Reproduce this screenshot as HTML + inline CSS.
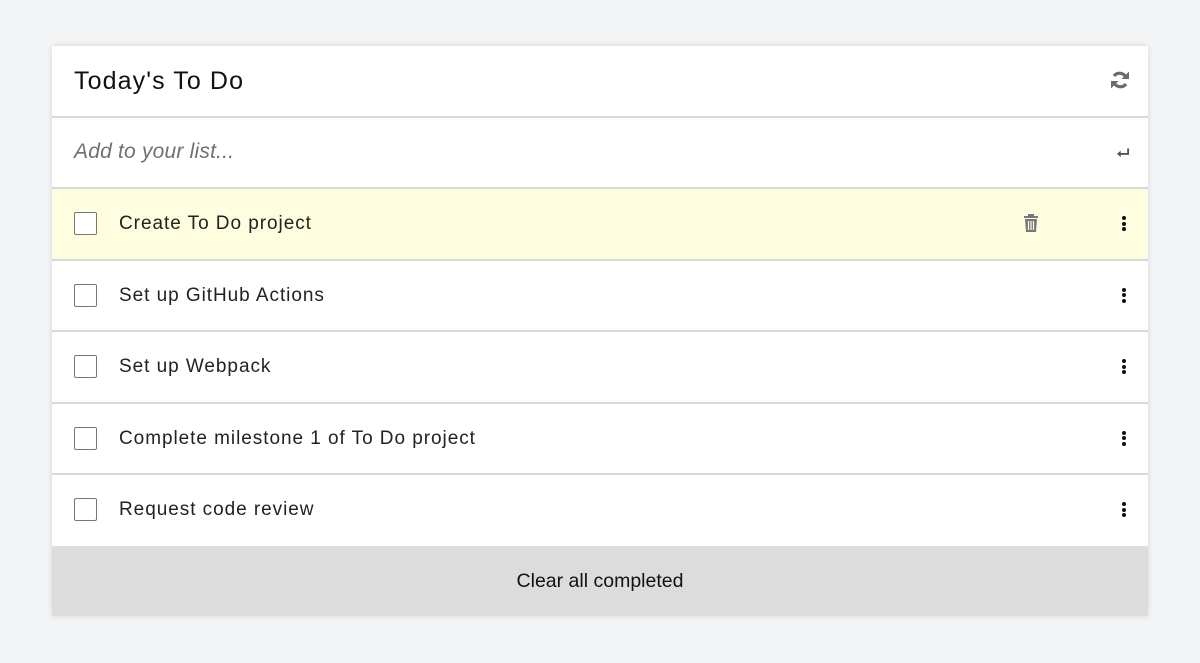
<!DOCTYPE html>
<html><head><style>
*{box-sizing:border-box;margin:0;padding:0}
body{width:1200px;height:663px;background:#f3f4f6;font-family:"Liberation Sans",sans-serif;position:relative;overflow:hidden}
.card{position:absolute;left:52px;top:46px;width:1096px;height:570px;background:#fff;box-shadow:0 0 6px rgba(0,0,0,.12)}
.row{position:absolute;left:0;width:1096px;border-bottom:2px solid #d9d9d9}
.title{font-size:25px;color:#111;position:absolute;left:22px;top:21px;letter-spacing:1.1px}
.add{font-size:21px;font-style:italic;color:#707070;position:absolute;left:22px;top:22px;letter-spacing:0.2px}
.cb{position:absolute;left:22px;top:23px;width:23px;height:23px;border:1.5px solid #777;border-radius:2px;background:#fff}
.txt{position:absolute;left:67px;top:24px;font-size:19px;color:#222;letter-spacing:0.95px}
.dots{position:absolute;left:1070px;top:27px;width:4px}
.dots i{display:block;width:4px;height:4px;border-radius:2px;background:#111;margin-bottom:1.5px}
.foot{position:absolute;left:0;top:500px;width:1096px;height:70px;background:#dcdcdc;text-align:center;line-height:70px;font-size:19.5px;color:#111}
</style></head><body>
<div class="card">
<div class="row" style="top:0;height:72px"><div class="title">Today's To Do</div>
<svg style="position:absolute;left:1058px;top:24px" width="20" height="20" viewBox="0 0 20 20"><path d="M16 7.5A7 7 0 0 0 4 6" stroke="#6b6b6b" stroke-width="3.2" fill="none"/><path d="M19 1.5v7.5h-7.5z" fill="#6b6b6b"/><path d="M4 12.5a7 7 0 0 0 12 1.5" stroke="#6b6b6b" stroke-width="3.2" fill="none"/><path d="M1 18.5v-7.5h7.5z" fill="#6b6b6b"/></svg></div>
<div class="row" style="top:72px;height:71px"><div class="add">Add to your list...</div>
<svg style="position:absolute;left:1065px;top:30px" width="13" height="10" viewBox="0 0 14 10"><path d="M12 0v6H3" stroke="#555" stroke-width="2" fill="none"/><path d="M0 6l4-3.5v7z" fill="#555"/></svg></div>
<div class="row" style="top:143px;height:71.5px;background:#fefde0"><div class="cb"></div><div class="txt">Create To Do project</div>
<svg style="position:absolute;left:971px;top:25px" width="16" height="18" viewBox="0 0 16 18"><rect x="1" y="2" width="14" height="2" fill="#777"/><rect x="5" y="0" width="6" height="2" fill="#777"/><path d="M2 5h12l-1 13H3z" fill="#777"/><path d="M5.5 7v9M8 7v9M10.5 7v9" stroke="#fefde0" stroke-width="1.2"/></svg>
<div class="dots"><i></i><i></i><i></i></div></div>
<div class="row" style="top:214.5px;height:71.5px"><div class="cb"></div><div class="txt">Set up GitHub Actions</div><div class="dots"><i></i><i></i><i></i></div></div>
<div class="row" style="top:286px;height:71.5px"><div class="cb"></div><div class="txt">Set up Webpack</div><div class="dots"><i></i><i></i><i></i></div></div>
<div class="row" style="top:357.5px;height:71.5px"><div class="cb"></div><div class="txt">Complete milestone 1 of To Do project</div><div class="dots"><i></i><i></i><i></i></div></div>
<div class="row" style="top:429px;height:71px;border-bottom:none"><div class="cb"></div><div class="txt">Request code review</div><div class="dots"><i></i><i></i><i></i></div></div>
<div class="foot">Clear all completed</div>
</div>
</body></html>
